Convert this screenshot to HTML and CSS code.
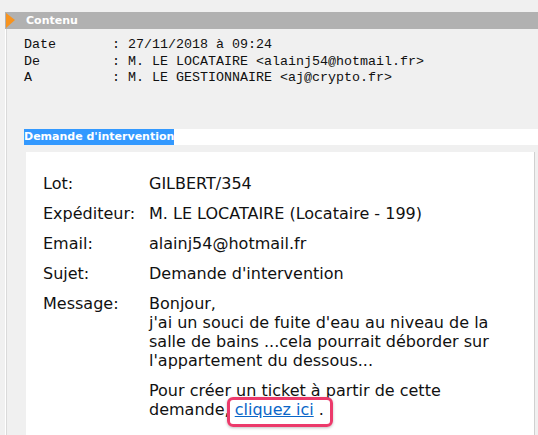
FILE: index.html
```html
<!DOCTYPE html>
<html lang="fr">
<head>
  <meta charset="UTF-8" />
  <title>Contenu - Demande d'intervention</title>
  <link rel="stylesheet" href="styles.css">
</head>
<body>
  <div class="section">
    <div class="section-head">
      <span class="arrow"></span>
      <span class="section-title">Contenu</span>
    </div>

    <div class="section-body">
      <!-- En-tete du message -->
      <pre class="mail-head">Date       : 27/11/2018 à 09:24
De         : M. LE LOCATAIRE &lt;alainj54@hotmail.fr&gt;
A          : M. LE GESTIONNAIRE &lt;aj@crypto.fr&gt;</pre>

      <div class="subject-line"><span class="selected">Demande d'intervention</span></div>

      <!-- Corps du message -->
      <div class="panel">
        <div class="fields">
          <div class="label">Lot:</div>
          <div class="value">GILBERT/354</div>

          <div class="label">Expéditeur:</div>
          <div class="value">M. LE LOCATAIRE (Locataire - 199)</div>

          <div class="label">Email:</div>
          <div class="value">alainj54@hotmail.fr</div>

          <div class="label">Sujet:</div>
          <div class="value">Demande d'intervention</div>

          <div class="label">Message:</div>
          <div class="value">
            <p>Bonjour,<br>
            j'ai un souci de fuite d'eau au niveau de la salle de bains ...cela pourrait déborder sur l'appartement du dessous...</p>
            <p>Pour créer un ticket à partir de cette demande, <span class="callout"><a href="#">cliquez ici</a> .</span></p>
          </div>
        </div>
      </div>
    </div>
  </div>
</body>
</html>
```

FILE: styles.css
```css
body {
  margin: 0;
  background: #f0f0f0;
  font-family: 'DejaVu Sans', Verdana, sans-serif;
  color: #111;
  overflow: hidden;
}
.section {
  margin: 12px 0 0 5px;
}
.section-head {
  display: flex;
  align-items: center;
  height: 17px;
  background: #b1b1b1;
}
.arrow {
  width: 0;
  height: 0;
  margin-left: 1px;
  border-left: 9px solid #f7931e;
  border-top: 7px solid transparent;
  border-bottom: 8px solid transparent;
}
.section-title {
  margin-left: 11px;
  color: #fff;
  font-weight: bold;
  font-size: 11px;
  line-height: 17px;
}
.section-body {
  border-left: 1px solid #fff;
  box-shadow: inset 1px 0 #dadada;
  padding-top: 8px;
  height: 400px;
}
.mail-head {
  margin: 0 0 42px 18px;
  font-family: 'Liberation Mono', 'Courier New', monospace;
  font-size: 13.33px;
  line-height: 16.5px;
  color: #111;
}
.subject-line {
  margin-left: 18px;
  height: 16px;
  line-height: 16px;
  background: #fff;
  font-size: 11px;
  font-weight: bold;
}
.selected {
  display: inline-block;
  background: #3399ff;
  color: #fff;
}
.panel {
  margin: 7px 3px 0 20px;
  background: #fff;
  border-right: 1px solid #d0d0d0;
  padding: 22px 25px 20px 17px;
  height: 300px;
}
.fields {
  display: grid;
  grid-template-columns: 106px 1fr;
  row-gap: 11px;
  font-size: 16px;
  line-height: 19px;
}
.value p {
  margin: 0 0 11px;
}
.callout {
  position: relative;
}
.callout::before {
  content: "";
  position: absolute;
  left: -8px;
  right: -9px;
  top: -3px;
  bottom: -8px;
  border: 3px solid #ec3a6b;
  border-radius: 6px;
  box-shadow: 0 1px 3px rgba(0,0,0,0.25);
}
.callout a {
  color: #0a66c8;
}
```
